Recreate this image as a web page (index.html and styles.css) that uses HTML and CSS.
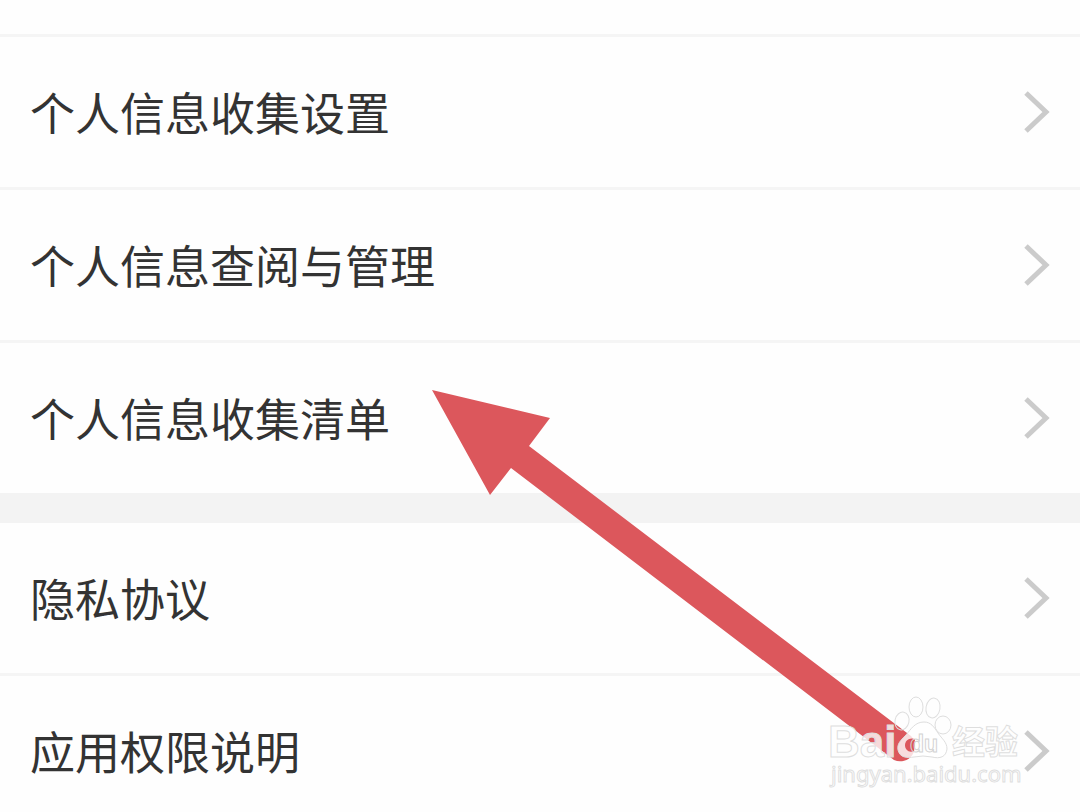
FILE: index.html
```
<!DOCTYPE html>
<html lang="zh-CN">
<head>
<meta charset="utf-8">
<meta name="viewport" content="width=device-width, initial-scale=1">
<title>个人信息</title>
<link rel="stylesheet" href="styles.css">
</head>
<body>
<svg class="defs" aria-hidden="true"><symbol id="chevron" viewBox="0 0 26 42"><path d="M2 2 22 21 2 40"/></symbol></svg>
<main class="screen">
  <nav class="group">
    <a class="row" href="#settings"><span>个人信息收集设置</span><svg class="chevron"><use href="#chevron"/></svg></a>
    <a class="row" href="#manage"><span>个人信息查阅与管理</span><svg class="chevron"><use href="#chevron"/></svg></a>
    <a class="row" href="#list"><span>个人信息收集清单</span><svg class="chevron"><use href="#chevron"/></svg></a>
  </nav>
  <nav class="group">
    <a class="row" href="#privacy"><span>隐私协议</span><svg class="chevron"><use href="#chevron"/></svg></a>
    <a class="row" href="#permissions"><span>应用权限说明</span><svg class="chevron"><use href="#chevron"/></svg></a>
  </nav>
  <svg class="overlay" viewBox="0 0 1080 812" aria-hidden="true">
    <path class="arrow" d="M432 390 550 418 529 446 911 736A15 15 0 0 1 894 760L511 468 490 495Z"/>
    <g class="mark">
      <ellipse class="toe" cx="902" cy="721" rx="7" ry="9" transform="rotate(12 902 721)"/>
      <ellipse class="toe" cx="916" cy="707" rx="7" ry="10"/>
      <ellipse class="toe" cx="933" cy="708" rx="7" ry="10" transform="rotate(10 933 708)"/>
      <ellipse class="toe" cx="943" cy="725" rx="8" ry="9"/>
      <path class="pad" d="M924 722C915 722 911 729 906 735C900 741 897 744 898 750C900 758 907 758 914 757Q923 755 932 757C940 759 946 757 947 749C947 742 942 739 938 733C934 727 931 722 924 722Z"/>
      <path class="bowl" d="M915 739C909 737 905 741 905 745C905 750 909 753 914 751Z"/>
      <text class="brand" x="828" y="757">Bai</text>
      <text class="du" x="910" y="752">du</text>
      <text class="cjk" x="952" y="754">经验</text>
      <text class="site" x="831" y="782">jingyan.baidu.com</text>
    </g>
  </svg>
</main>
</body>
</html>
```
FILE: styles.css
```
* {
  box-sizing: border-box;
}

body {
  margin: 0;
  background: #fefefe;
  color: #333;
  font-family: "Noto Sans CJK SC", sans-serif;
}

.defs {
  position: absolute;
  width: 0;
  height: 0;
}

.screen {
  position: relative;
  height: 100vh;
  padding-top: 34px;
  overflow: hidden;
}

.group + .group {
  border-top: 30px solid #f3f3f3;
}

.row {
  display: flex;
  align-items: center;
  justify-content: space-between;
  height: 153px;
  padding: 0 30px;
  border-top: 3px solid #f5f5f5;
  color: inherit;
  font-size: 45px;
  line-height: 64px;
  text-decoration: none;
}

.group + .group .row:first-child {
  height: 150px;
  border-top: 0;
}

.chevron {
  width: 26px;
  height: 42px;
  flex: none;
  overflow: visible;
  fill: none;
  stroke: #cbcbcb;
  stroke-width: 5px;
}

.overlay {
  position: absolute;
  top: 0;
  left: 0;
  width: 100%;
  pointer-events: none;
}

.arrow {
  fill: #dc575c;
}

.mark {
  fill: #fff;
  fill-opacity: 0.8;
  stroke: #dedede;
  stroke-width: 1px;
}

.toe {
  fill: none;
}

.bowl {
  fill: #dc575c;
  fill-opacity: 1;
  stroke: none;
}

.brand {
  font: bold 44px "Liberation Sans", sans-serif;
}

.du {
  fill: none;
  stroke: #d3d3d3;
  font: bold 23px "Liberation Sans", sans-serif;
}

.cjk {
  font: bold 33px "Noto Sans CJK SC", sans-serif;
}

.site {
  font: 22px "Noto Sans", sans-serif;
}
```
